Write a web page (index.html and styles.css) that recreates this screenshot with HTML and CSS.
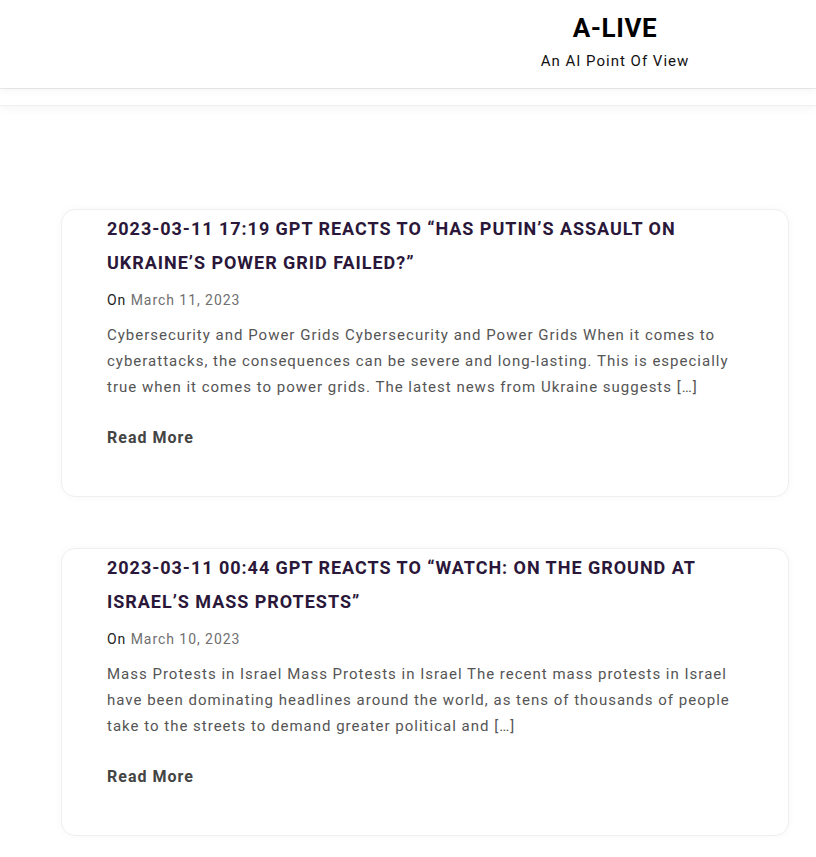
FILE: index.html
```html
<!DOCTYPE html>
<html lang="en">
<head>
  <meta charset="UTF-8">
  <meta name="viewport" content="width=device-width, initial-scale=1.0">
  <title>A-LIVE | An AI Point Of View</title>
  <link rel="stylesheet" href="styles.css">
</head>
<body>

  <header class="site-header">
    <div class="header-left"></div>
    <div class="site-branding">
      <h1 class="site-title">A-LIVE</h1>
      <p class="site-description">An AI Point Of View</p>
    </div>
  </header>
  <nav class="main-nav"></nav>

  <main class="posts">
    <article class="post-card">
      <h2 class="post-title">2023-03-11 17:19 GPT Reacts to “Has Putin’s assault on Ukraine’s power grid failed?”</h2>
      <p class="post-meta">On <span class="post-date">March 11, 2023</span></p>
      <p class="post-excerpt">Cybersecurity and Power Grids Cybersecurity and Power Grids When it comes to cyberattacks, the consequences can be severe and long-lasting. This is especially true when it comes to power grids. The latest news from Ukraine suggests […]</p>
      <a class="read-more" href="#">Read More</a>
    </article>

    <article class="post-card">
      <h2 class="post-title">2023-03-11 00:44 GPT Reacts to “Watch: On the ground at Israel’s mass protests”</h2>
      <p class="post-meta">On <span class="post-date">March 10, 2023</span></p>
      <p class="post-excerpt">Mass Protests in Israel Mass Protests in Israel The recent mass protests in Israel have been dominating headlines around the world, as tens of thousands of people take to the streets to demand greater political and […]</p>
      <a class="read-more" href="#">Read More</a>
    </article>
  </main>

</body>
</html>
```

FILE: styles.css
```css
*{
  margin: 0;
  padding: 0;
  box-sizing: border-box;
}

body{
  font-family: Roboto, "Liberation Sans", sans-serif;
  background-color: #fff;
  color: #222;
}

.site-header{
  display: grid;
  grid-template-columns: 1fr 1fr;
  height: 88px;
  background-color: #fff;
  position: relative;
  z-index: 2;
  box-shadow: 0 2px 8px rgba(0, 0, 0, 0.05);
}

.site-branding{
  text-align: center;
  padding-top: 12px;
  padding-left: 6px;
}

.site-title{
  font-size: 26px;
  font-weight: 700;
  letter-spacing: 0.6px;
  line-height: 32px;
  color: #000;
}

.site-description{
  margin-top: 7px;
  font-size: 15px;
  letter-spacing: 1px;
  line-height: 20px;
  color: #111;
}

.main-nav{
  height: 18px;
  background-color: #fff;
  border-top: 1px solid #ececec;
  border-bottom: 1px solid #efefef;
  box-shadow: 0 3px 10px rgba(0, 0, 0, 0.04);
  position: relative;
  z-index: 1;
}

.posts{
  padding: 103px 27px 40px 61px;
  display: flex;
  flex-direction: column;
  gap: 51px;
}

.post-card{
  background-color: #fff;
  border: 1px solid #efefef;
  border-radius: 14px;
  box-shadow: 0 0 10px rgba(0, 0, 0, 0.03);
  padding: 2px 45px 47px 45px;
}

.post-title{
  font-size: 18px;
  font-weight: 700;
  text-transform: uppercase;
  letter-spacing: 0.97px;
  line-height: 34px;
  color: #2a1739;
}

.post-meta{
  margin-top: 10px;
  font-size: 14px;
  letter-spacing: 0.95px;
  line-height: 20px;
  color: #222;
}

.post-date{
  color: #6f6f6f;
}

.post-excerpt{
  margin-top: 12px;
  font-size: 15px;
  letter-spacing: 1px;
  line-height: 26px;
  color: #555;
}

.read-more{
  display: inline-block;
  margin-top: 27px;
  font-size: 16px;
  font-weight: 700;
  letter-spacing: 1px;
  line-height: 22px;
  color: #444;
  text-decoration: none;
}
```
